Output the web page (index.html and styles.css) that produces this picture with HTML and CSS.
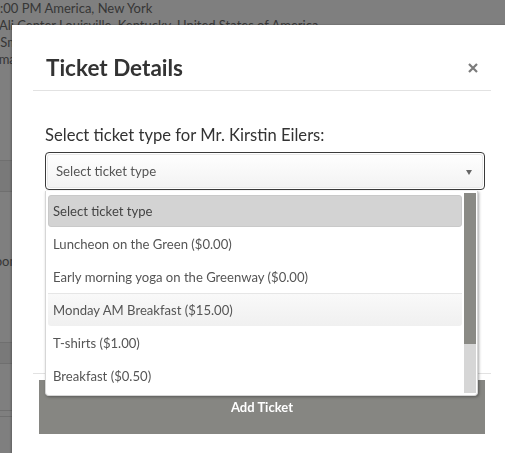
FILE: index.html
```html
<!DOCTYPE html>
<html lang="en">
<head>
<meta charset="utf-8">
<title>Ticket Details</title>
<link rel="stylesheet" href="styles.css">
</head>
<body>
<div class="page">
  <div class="bg-info">
    <p class="bg-line">10:00 PM America, New York</p>
    <p class="bg-line">at Ali Center Louisville, Kentucky, United States of America</p>
    <p class="bg-line">to Small Groups</p>
    <p class="bg-line">Female</p>
  </div>
  <div class="bg-band bg-band-first"></div>
  <div class="bg-row"><span class="bg-line">Room</span></div>
  <div class="bg-band bg-band-second"></div>
  <div class="bg-rule"></div>
  <div class="bg-rule bg-rule-close"></div>
</div>
<div class="overlay"></div>
<div class="modal">
  <div class="modal-header">
    <h2 class="modal-title">Ticket Details</h2>
    <button class="close" type="button" aria-label="Close">
      <svg width="10" height="10" viewBox="0 0 10 10"><path d="M1 1L9 9M9 1L1 9" stroke="#7b7b7b" stroke-width="2.2" stroke-linecap="butt"/></svg>
    </button>
  </div>
  <div class="modal-body">
    <label class="field-label">Select ticket type for Mr. Kirstin Eilers:</label>
    <div class="select-wrap">
      <div class="select">
        <div class="select-inner">
          <span class="select-text">Select ticket type</span>
          <span class="select-arrow"></span>
        </div>
      </div>
      <div class="dropdown">
        <ul class="options">
          <li class="option option-selected">Select ticket type</li>
          <li class="option">Luncheon on the Green ($0.00)</li>
          <li class="option">Early morning yoga on the Greenway ($0.00)</li>
          <li class="option option-hover">Monday AM Breakfast ($15.00)</li>
          <li class="option">T-shirts ($1.00)</li>
          <li class="option">Breakfast ($0.50)</li>
        </ul>
        <div class="scrollbar">
          <div class="scroll-thumb"></div>
          <div class="scroll-track"></div>
        </div>
      </div>
    </div>
  </div>
  <div class="modal-footer">
    <button class="btn-add" type="button">Add Ticket</button>
  </div>
</div>
</body>
</html>
```
FILE: styles.css
```css
* { box-sizing: border-box; }
html, body { margin: 0; padding: 0; }
body {
  font-family: "Lato", "Liberation Sans", sans-serif;
  background: #fff;
  color: #333;
  width: 505px;
  height: 453px;
  overflow: hidden;
}
.page {
  margin-left: -15px;
  color: #6e6e6e;
  font-size: 13px;
}
.bg-info { height: 160px; }
.bg-line {
  margin: 0;
  line-height: 17px;
  white-space: nowrap;
}
.bg-band {
  background: #f3f3f3;
  border-top: 1px solid #dedede;
  border-bottom: 1px solid #dedede;
}
.bg-band-first { height: 32px; }
.bg-row {
  height: 150px;
  padding-top: 61px;
  padding-left: 2px;
}
.bg-band-second { height: 22px; }
.bg-rule {
  margin-top: 46px;
  border-top: 1px solid #dedede;
}
.bg-rule-close { margin-top: 5px; }
.overlay {
  position: fixed;
  inset: 0;
  background: rgba(0, 0, 0, 0.5);
}
.modal {
  position: absolute;
  top: 25px;
  left: 12px;
  width: 500px;
  height: 440px;
  background: #fff;
  box-shadow: -1px 0 2px rgba(0, 0, 0, 0.25);
}
.modal-header {
  margin: 0 21px;
  height: 66px;
  padding: 30px 13px 10px 13px;
  border-bottom: 1px solid #e2e2e2;
  display: flex;
  align-items: center;
}
.modal-title {
  margin: 0;
  font-size: 22.5px;
  line-height: 26px;
  font-weight: 700;
  color: #333;
}
.close {
  margin-left: auto;
  border: 0;
  background: none;
  padding: 0;
  width: 10px;
  height: 10px;
  display: flex;
}
.modal-body {
  margin: 0 21px;
  height: 282px;
  padding: 34px 6px 0 12px;
}
.field-label {
  display: block;
  font-size: 16.6px;
  line-height: 20px;
  color: #333;
  margin-bottom: 7px;
}
.select-wrap { position: relative; }
.select {
  height: 38px;
  border: 1px solid #3a3a3a;
  border-radius: 4px;
  padding: 1px;
}
.select-inner {
  height: 100%;
  border: 1px solid #e8e8e8;
  border-radius: 3px;
  background: linear-gradient(#fefefe, #f3f3f3);
  display: flex;
  align-items: center;
  padding: 0 10px 0 8px;
}
.select-text {
  font-size: 13.2px;
  color: #555;
}
.select-arrow {
  margin-left: auto;
  margin-top: 2px;
  width: 0;
  height: 0;
  border-left: 3.5px solid transparent;
  border-right: 3.5px solid transparent;
  border-top: 5px solid #666;
}
.dropdown {
  position: absolute;
  top: 39px;
  left: 0;
  width: 433px;
  height: 205px;
  background: #fff;
  border: 1px solid #d6d6d6;
  border-top: 0;
  border-radius: 0 0 4px 4px;
  box-shadow: 1px 1px 3px rgba(0, 0, 0, 0.35);
  display: flex;
  z-index: 2;
}
.options {
  list-style: none;
  margin: 0;
  padding: 4px 1px 0 2px;
  flex: 1;
  overflow: hidden;
}
.option {
  height: 33px;
  display: flex;
  align-items: center;
  padding-left: 5px;
  font-size: 13.1px;
  color: #555;
  white-space: nowrap;
}
.option-selected {
  height: 32px;
  background: #d3d3d3;
  border: 1px solid #c9c9c9;
  border-radius: 3px;
  padding-left: 4px;
  color: #444;
}
.option-hover {
  background: linear-gradient(#f9f9f9, #f0f0f0);
  border-top: 1px solid #e6e6e6;
  border-radius: 0 0 3px 3px;
}
.scrollbar {
  width: 12px;
  margin: 2px 1px 2px 1px;
  display: flex;
  flex-direction: column;
}
.scroll-thumb {
  height: 151px;
  background: #8a8a85;
}
.scroll-track {
  flex: 1;
  background: #d6d6d6;
}
.modal-footer {
  margin: 0 21px;
  border-top: 1px solid #e2e2e2;
  padding: 6px 6px 0 6px;
}
.btn-add {
  display: block;
  width: 100%;
  height: 54px;
  border: 0;
  background: #868682;
  color: #fff;
  font-family: "Lato", "Liberation Sans", sans-serif;
  font-size: 13px;
  font-weight: 700;
}
```
